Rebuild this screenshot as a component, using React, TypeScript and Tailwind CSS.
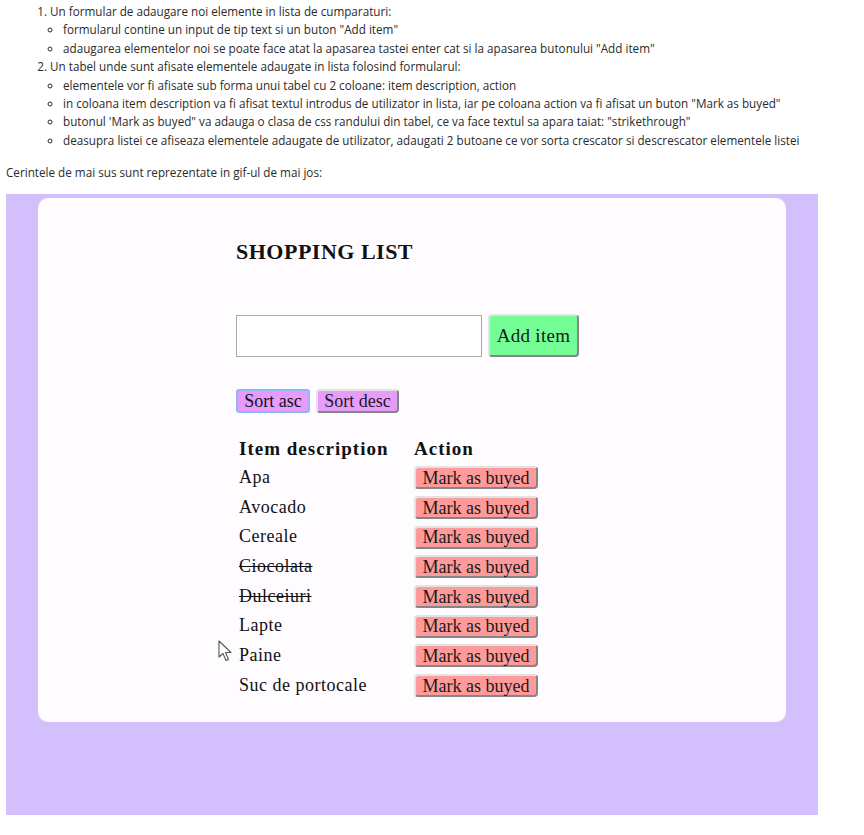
import { useState } from "react";

const initialItems = [
  { name: "Apa", bought: false },
  { name: "Avocado", bought: false },
  { name: "Cereale", bought: false },
  { name: "Ciocolata", bought: true },
  { name: "Dulceiuri", bought: true },
  { name: "Lapte", bought: false },
  { name: "Paine", bought: false },
  { name: "Suc de portocale", bought: false },
];

const btn =
  "border-2 border-solid border-t-[#e3e3e3] border-l-[#e3e3e3] border-r-[#858585] border-b-[#858585] rounded-[4px] text-[#1a1a1a] leading-none";

export default function App() {
  const [items, setItems] = useState(initialItems);
  const [text, setText] = useState("");

  const addItem = () => {
    if (!text.trim()) return;
    setItems([...items, { name: text.trim(), bought: false }]);
    setText("");
  };

  return (
    <div className="relative w-[864px] h-[835px] bg-white font-['Open_Sans',sans-serif] text-[11.7px] leading-[18.4px] text-[#2b2b2b]">
      <ol className="list-decimal pl-[50px] pt-[2px]">
        <li>
          Un formular de adaugare noi elemente in lista de cumparaturi:
          <ul className="list-[circle] pl-[13px]">
            <li>formularul contine un input de tip text si un buton "Add item"</li>
            <li>adaugarea elementelor noi se poate face atat la apasarea tastei enter cat si la apasarea butonului "Add item"</li>
          </ul>
        </li>
        <li>
          Un tabel unde sunt afisate elementele adaugate in lista folosind formularul:
          <ul className="list-[circle] pl-[13px]">
            <li>elementele vor fi afisate sub forma unui tabel cu 2 coloane: item description, action</li>
            <li>in coloana item description va fi afisat textul introdus de utilizator in lista, iar pe coloana action va fi afisat un buton "Mark as buyed"</li>
            <li>butonul 'Mark as buyed" va adauga o clasa de css randului din tabel, ce va face textul sa apara taiat: "strikethrough"</li>
            <li>deasupra listei ce afiseaza elementele adaugate de utilizator, adaugati 2 butoane ce vor sorta crescator si descrescator elementele listei</li>
          </ul>
        </li>
      </ol>
      <p className="pl-[6px] mt-[14px]">Cerintele de mai sus sunt reprezentate in gif-ul de mai jos:</p>

      <div className="absolute left-[6px] top-[194px] w-[812px] h-[621px] bg-[#d4bffd] pt-[4px] pl-[32px]">
        <div className="w-[748px] h-[524px] rounded-[10px] bg-[#fffcff] pl-[198px] pt-[40px] font-['Liberation_Serif',serif] text-[#111]">
          <h1 className="text-[22px] font-bold leading-[28px] tracking-[0.5px]">SHOPPING LIST</h1>

          <div className="flex items-center gap-[6px] mt-[48px]">
            <input
              value={text}
              onChange={(e) => setText(e.target.value)}
              onKeyDown={(e) => e.key === "Enter" && addItem()}
              className="w-[246px] h-[42px] border border-[#a9a9a9] bg-white px-2 outline-none"
            />
            <button onClick={addItem} className={`${btn} w-[91px] h-[43px] bg-[#75fd96] text-[19px] tracking-[0.3px]`}>
              Add item
            </button>
          </div>

          <div className="flex gap-[6px] mt-[32px]">
            <button
              onClick={() => setItems([...items].sort((a, b) => a.name.localeCompare(b.name)))}
              className="w-[74px] h-[24px] border-2 border-[#8db8f5] rounded-[3px] bg-[#e79cfb] text-[18px] leading-none"
            >
              Sort asc
            </button>
            <button
              onClick={() => setItems([...items].sort((a, b) => b.name.localeCompare(a.name)))}
              className={`${btn} w-[83px] h-[24px] bg-[#e79cfb] text-[18px]`}
            >
              Sort desc
            </button>
          </div>

          <div className="grid grid-cols-[175px_auto] mt-[22px] pl-[3px] text-[18px] tracking-[0.5px]">
            <div className="font-bold text-[19px] tracking-[1px] h-[28px] leading-[28px]">Item description</div>
            <div className="font-bold text-[19px] tracking-[1px] h-[28px] leading-[28px]">Action</div>
            {items.map((item, i) => (
              <Row
                key={item.name}
                name={item.name}
                bought={item.bought}
                onMark={() =>
                  setItems(items.map((it, j) => (j === i ? { ...it, bought: true } : it)))
                }
              />
            ))}
          </div>
        </div>
      </div>

      {/* mouse pointer from the gif */}
      <svg className="absolute left-[218px] top-[640px]" width="16" height="22" viewBox="0 0 16 22">
        <path d="M1 1 L1 17 L5 13.5 L8 20.5 L10.5 19.5 L7.5 12.5 L13 12.5 Z" fill="white" stroke="#555" strokeWidth="1.1" strokeLinejoin="round" />
      </svg>
    </div>
  );
}

function Row({ name, bought, onMark }: { name: string; bought: boolean; onMark: () => void }) {
  return (
    <>
      <div className={`h-[29.7px] leading-[29.7px] ${bought ? "line-through" : ""}`}>{name}</div>
      <div className="h-[29.7px] flex items-center">
        <button onClick={onMark} className={`${btn} w-[124px] h-[23px] bg-[#ff9a9a] text-[18px] tracking-normal`}>
          Mark as buyed
        </button>
      </div>
    </>
  );
}
